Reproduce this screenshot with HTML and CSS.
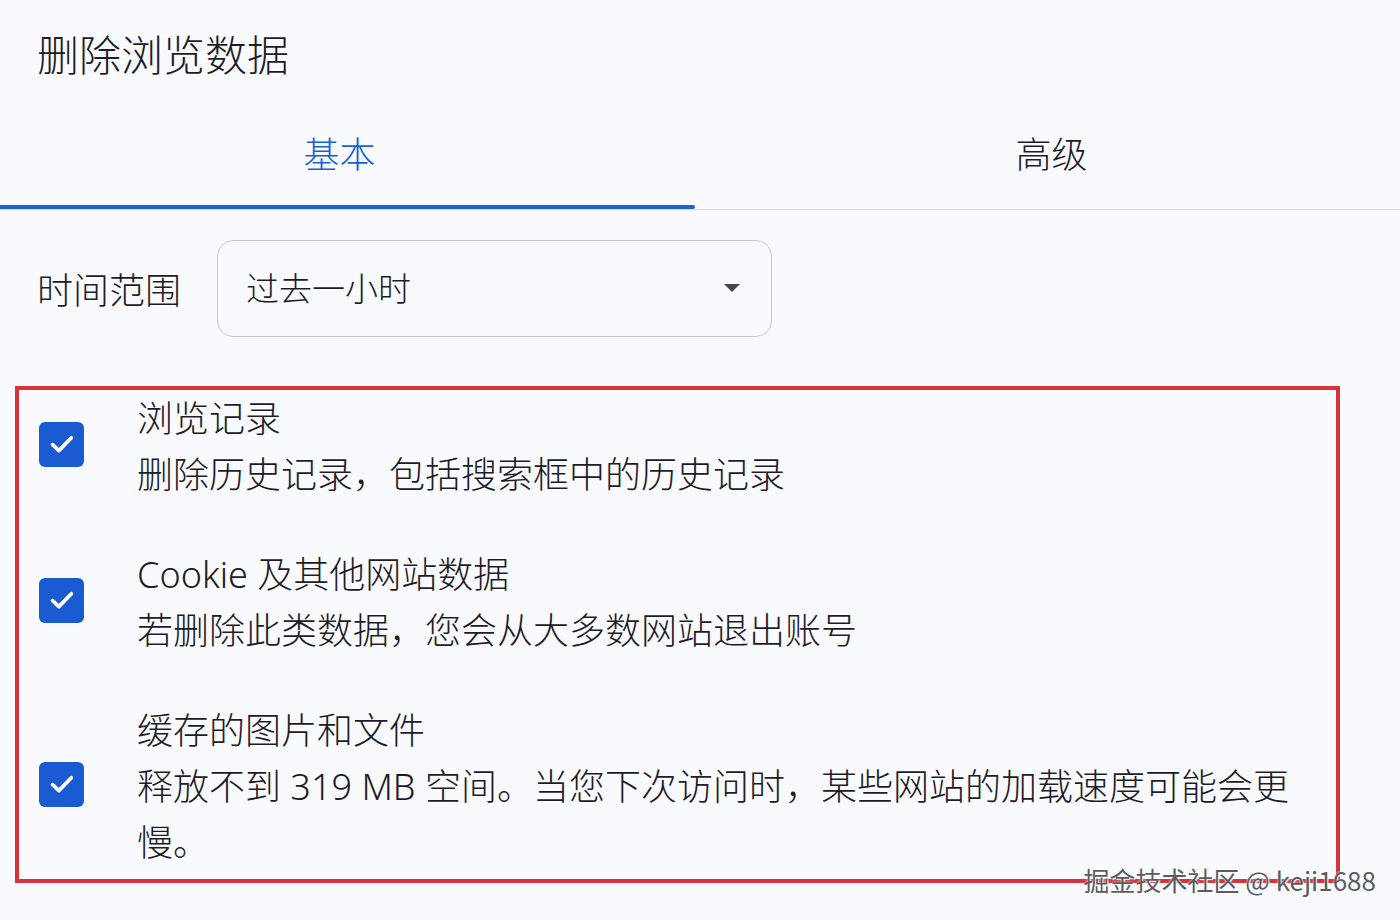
FILE: index.html
```html
<!DOCTYPE html>
<html lang="zh-CN">
<head>
  <meta charset="UTF-8">
  <title>删除浏览数据</title>
  <link rel="stylesheet" href="styles.css">
</head>
<body>
  <h1 class="title">删除浏览数据</h1>

  <div class="tabs">
    <div class="tab active">
      <div class="tab-label">基本</div>
      <div class="tab-bar"></div>
    </div>
    <div class="tab">
      <div class="tab-label">高级</div>
      <div class="tab-bar"></div>
    </div>
  </div>

  <div class="range-row">
    <span class="range-label">时间范围</span>
    <div class="select">
      <span class="select-value">过去一小时</span>
      <span class="select-arrow"></span>
    </div>
  </div>

  <div class="options">
    <div class="option">
      <div class="checkbox">
        <svg viewBox="0 0 24 24" width="30" height="30"><path d="M4.5 12.5l5 4.8L19.5 7" fill="none" stroke="#fff" stroke-width="3" stroke-linecap="round" stroke-linejoin="round"/></svg>
      </div>
      <div class="option-text">
        <div class="option-title">浏览记录</div>
        <div class="option-desc">删除历史记录，包括搜索框中的历史记录</div>
      </div>
    </div>

    <div class="option">
      <div class="checkbox">
        <svg viewBox="0 0 24 24" width="30" height="30"><path d="M4.5 12.5l5 4.8L19.5 7" fill="none" stroke="#fff" stroke-width="3" stroke-linecap="round" stroke-linejoin="round"/></svg>
      </div>
      <div class="option-text">
        <div class="option-title">Cookie 及其他网站数据</div>
        <div class="option-desc">若删除此类数据，您会从大多数网站退出账号</div>
      </div>
    </div>

    <div class="option">
      <div class="checkbox">
        <svg viewBox="0 0 24 24" width="30" height="30"><path d="M4.5 12.5l5 4.8L19.5 7" fill="none" stroke="#fff" stroke-width="3" stroke-linecap="round" stroke-linejoin="round"/></svg>
      </div>
      <div class="option-text">
        <div class="option-title">缓存的图片和文件</div>
        <div class="option-desc">释放不到 319 MB 空间。当您下次访问时，某些网站的加载速度可能会更慢。</div>
      </div>
    </div>
  </div>

  <div class="watermark">掘金技术社区 @ keji1688</div>
</body>
</html>
```

FILE: styles.css
```css
body {
  margin: 0;
  background-color: #f8fafd;
  color: #1f1b28;
  font-family: "Noto Sans", "Noto Sans CJK SC", sans-serif;
  font-weight: 300;
  position: relative;
  height: 920px;
  overflow: hidden;
}

.title {
  margin: 0;
  padding: 0 37px;
  height: 110px;
  line-height: 110px;
  font-size: 42px;
  font-weight: 300;
}

.tabs {
  display: grid;
  grid-template-columns: 695px 1fr;
  border-bottom: 1px solid #d9dce1;
}

.tab {
  height: 99px;
  display: flex;
  flex-direction: column;
}

.tab-label {
  flex: 1;
  display: flex;
  align-items: center;
  justify-content: center;
  font-size: 36px;
  padding-bottom: 10px;
}

.tab-bar {
  height: 4px;
}

.tab.active .tab-label {
  color: #1a5fcf;
  padding-right: 16px;
}

.tab:last-child .tab-label {
  padding-left: 8px;
}

.tab.active .tab-bar {
  background-color: #1a62d6;
  border-radius: 0 3px 3px 0;
}

.range-row {
  display: flex;
  align-items: center;
  gap: 34px;
  margin-top: 30px;
  padding-left: 37px;
}

.range-label {
  font-size: 36px;
  width: 146px;
}

.select {
  width: 555px;
  height: 97px;
  box-sizing: border-box;
  border: 1px solid #c6c8cd;
  border-radius: 16px;
  display: flex;
  align-items: center;
  padding: 0 31px 4px 28px;
}

.select-value {
  flex: 1;
  font-size: 33px;
}

.select-arrow {
  width: 0;
  height: 0;
  border-left: 8px solid transparent;
  border-right: 8px solid transparent;
  border-top: 8px solid #4a454f;
  margin-top: 2px;
}

.options {
  margin: 49px 0 0 15px;
  width: 1325px;
  height: 497px;
  box-sizing: border-box;
  border: 4px solid #d8333a;
  padding: 1px 0 0 20px;
  display: flex;
  flex-direction: column;
  gap: 44px;
}

.option {
  display: flex;
  align-items: center;
  gap: 53px;
}

.checkbox {
  width: 45px;
  height: 45px;
  flex-shrink: 0;
  border-radius: 6px;
  background-color: #1b5bd2;
  display: flex;
  align-items: center;
  justify-content: center;
  margin-top: -6px;
}

.option-text {
  width: 1180px;
  font-size: 36px;
  line-height: 56px;
}

.watermark {
  position: absolute;
  right: 24px;
  bottom: 22px;
  font-size: 26px;
  font-weight: 400;
  color: #5c5c60;
  text-shadow: 0 0 2px #fff, 1px 1px 1px #fff;
  font-family: "Noto Sans CJK SC", sans-serif;
}
```
